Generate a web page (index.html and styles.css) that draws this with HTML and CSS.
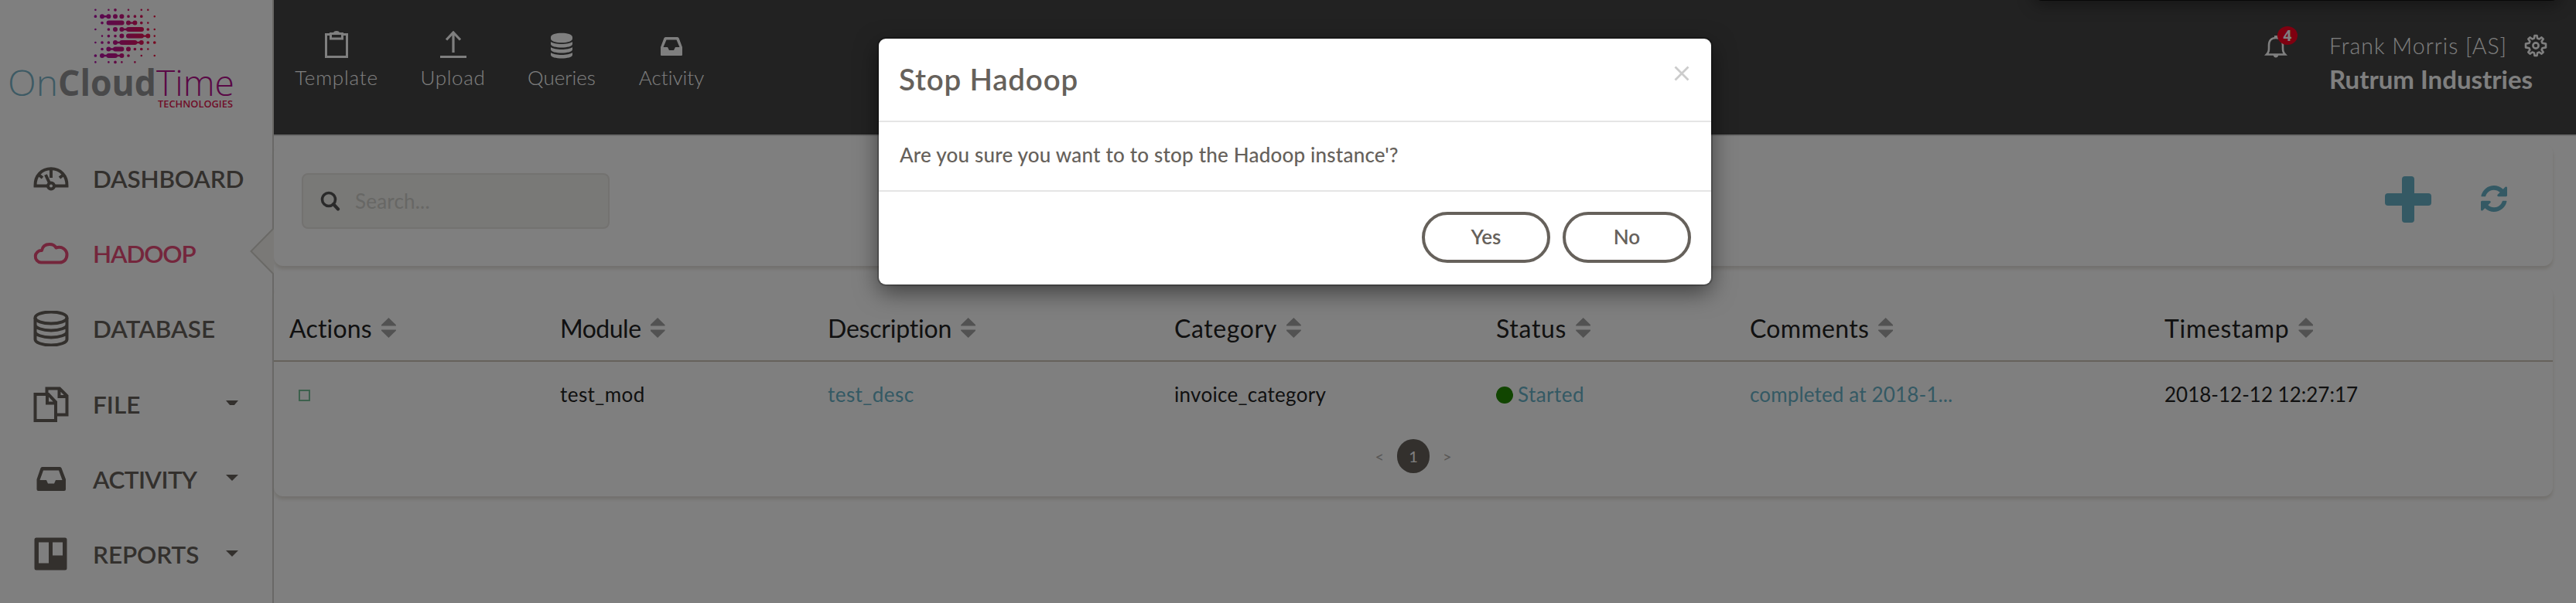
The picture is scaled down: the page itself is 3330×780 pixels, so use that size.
FILE: index.html
```html
<!DOCTYPE html>
<html lang="en">
<head>
<meta charset="utf-8">
<title>OnCloudTime - Hadoop</title>
<link rel="stylesheet" href="styles.css">
</head>
<body>
<div class="app">
  <aside class="sidebar">
    <svg class="logo" viewBox="0 0 352 170" width="352" height="170">
      <defs>
        <linearGradient id="dots" gradientUnits="userSpaceOnUse" x1="122" y1="0" x2="202" y2="0">
          <stop offset="0" stop-color="#b010a8"/><stop offset=".45" stop-color="#c81480"/><stop offset="1" stop-color="#f01440"/>
        </linearGradient>
      </defs>
      <g fill="none" stroke="url(#dots)" stroke-linecap="round">
        <path stroke-width="2.6" d="M123.4 12.8h.01M140.4 12.8h.01M166 12.8h.01M182.8 12.8h.01M191.3 12.8h.01M199.8 21.2h.01M191.3 29.6h.01M123.4 38h.01M199.8 38h.01M132 46.6h.01M199.8 46.6h.01M123.4 55h.01M191.3 63.5h.01M182.8 72h.01M199.8 72h.01M123.4 80.4h.01M140.4 80.4h.01M157.4 80.4h.01M174.4 80.4h.01"/>
        <path stroke-width="3.7" d="M149 12.8h.01M123.4 21.2h.01M166 21.2h.01M174.4 21.2h.01M182.8 21.2h.01M132 29.6h.01M182.8 29.6h.01M140.4 38h.01M191.3 38h.01M140.4 46.6h.01M149 46.6h.01M132 55h.01M140.4 55h.01M191.3 55h.01M199.8 55h.01M132 63.5h.01M174.4 63.5h.01M182.8 63.5h.01M123.4 72h.01M166 72h.01M149 80.4h.01"/>
        <path stroke-width="6" d="M132 21.2h.01M140.4 21.2h.01M149 21.2h.01M157.4 21.2h.01M140.6 29.6h17M166 29.6h.01M174.4 29.6h.01M149 38h.01M157.4 38h.01M166 38h17M157.4 46.6h.01M166 46.6h17M191.3 46.6h.01M149 55h.01M157.4 55h17M182.8 55h.01M140.4 63.5h.01M149 63.5h8.4M166 63.5h.01M132 72h.01M140.4 72h8.6M157.4 72h.01"/>
        <path stroke-width="2.4" d="M132 21.2h8.4v.01M166 29.6h8.4v.01M157.4 38h9v.01M182.8 46.6h8.5v.01M149 55h33v.01M140.4 63.5h9v.01M132 72h25v.01"/>
      </g>
      <g class="logo-name">
        <text class="logo-on" x="10" y="124.3" textLength="65" lengthAdjust="spacingAndGlyphs">On</text>
        <text class="logo-cloud" x="75" y="124.3" textLength="127" lengthAdjust="spacingAndGlyphs">Cloud</text>
        <text class="logo-time" x="202" y="124.3" textLength="101" lengthAdjust="spacingAndGlyphs">Time</text>
        <text class="logo-tech" x="204" y="138.8" textLength="97" lengthAdjust="spacingAndGlyphs">TECHNOLOGIES</text>
      </g>
    </svg>
    <nav class="menu">
      <a class="item"><svg class="ico" viewBox="0 0 46 46"><path d="M2.5 32.5C2 19 11 10.300 23 10.300S44 19 43.500 32.500Z" fill="none" stroke="currentColor" stroke-width="4"/><path d="M23 10v12M7 18l5 4M39 18l-5 4M16 18l7 15" fill="none" stroke="currentColor" stroke-width="4"/><circle cx="23" cy="32.500" r="4" fill="#fff" stroke="currentColor" stroke-width="4"/></svg><span class="t-dash">DASHBOARD</span></a>
      <a class="item active"><svg class="ico" viewBox="0 0 46 46"><path d="M10 34.500a7.500 7.500 0 0 1 1-15.500C12 13.500 16 11 21 11c4 0 7 1.500 8.500 4.500C37 13 43.500 18 43.500 24.500S39 34.500 34 34.500Z" fill="none" stroke="currentColor" stroke-width="4" stroke-linejoin="round"/></svg><span class="t-had">HADOOP</span></a>
      <a class="item"><svg class="ico" viewBox="0 0 46 46"><g fill="none" stroke="currentColor" stroke-width="4"><ellipse cx="23" cy="9" rx="20.500" ry="7.500"/><path d="M2.500 9v28c0 4 9 7.500 20.500 7.500S43.500 41 43.500 37V9M2.500 18c0 4 9 7.500 20.500 7.500S43.500 22 43.500 18M2.500 27c0 4 9 7.500 20.500 7.500S43.500 31 43.500 27"/></g></svg><span class="t-data">DATABASE</span></a>
      <a class="item"><svg class="ico" viewBox="0 0 46 46"><path d="M2.500 10h17l9.500 10v24H2.500ZM18 10v11.500h11M17.500 8V2.500H34L43.500 12v24.500H31M33.500 2.500V13h10" fill="none" stroke="currentColor" stroke-width="4"/></svg><span class="t-file">FILE</span><i class="caret clip"></i></a>
      <a class="item"><svg class="ico" viewBox="0 0 46 46"><path fill="currentColor" fill-rule="evenodd" d="M11.500 7h23q1.500 0 2 1.500L42 23v13q0 2-2 2H6.500q-2 0-2-2V23L9.500 8.500q.5-1.500 2-1.500ZM13 11.500 8.500 24H17l2 4.500h8L29 24h8.500L33 11.500Z"/></svg><span class="t-act">ACTIVITY</span><i class="caret"></i></a>
      <a class="item"><svg class="ico" viewBox="0 0 46 46"><path fill="currentColor" fill-rule="evenodd" d="M4 1.500h37q2.500 0 2.500 2.500v37q0 2.500-2.500 2.500H4q-2.500 0-2.500-2.500V4Q1.500 1.500 4 1.500ZM7 7.500v27h13v-27ZM25 7.500v17h13v-17Z"/></svg><span class="t-rep">REPORTS</span><i class="caret"></i></a>
    </nav>
    <svg class="notch" width="32" height="60" viewBox="0 0 32 60"><path d="M32 0 2.500 30 32 60" fill="#f4f3ef" stroke="#d4d2cc" stroke-width="2"/></svg>
  </aside>

  <div class="main">
    <header class="topbar">
      <nav class="tools">
        <a class="tool w1"><svg viewBox="0 0 36 36"><path d="M9 4.500H4.500v29h27v-29H27M10.500 3.500h15v6.500h-15Z" fill="none" stroke="currentColor" stroke-width="3"/><path d="M14 3q0-3 4-3t4 3z" fill="currentColor"/></svg><span>Template</span></a>
        <a class="tool w2"><svg viewBox="0 0 36 36"><path d="M18 28V3M9 11.500 18 2l9 9.500M1 33.500h34" fill="none" stroke="currentColor" stroke-width="3.200"/></svg><span>Upload</span></a>
        <a class="tool w3"><svg viewBox="0 0 36 36"><path fill="currentColor" d="M4 8c0-7 28-7 28 0v2c0 7-28 7-28 0ZM4 14c5 4 23 4 28 0v3c0 6-28 6-28 0ZM4 21c5 4 23 4 28 0v3c0 6-28 6-28 0ZM4 28c5 4 23 4 28 0v3c0 6-28 6-28 0Z"/></svg><span>Queries</span></a>
        <a class="tool w4"><svg viewBox="0 0 36 36"><path fill="currentColor" fill-rule="evenodd" d="M10 8h16l1.500 1L32 21v10q0 1-1 1H5q-1 0-1-1V21L8.500 9ZM11.500 11.500 7.500 21H13l2 4h6l2-4h5.500l-4-9.500Z"/></svg><span>Activity</span></a>
      </nav>
      <div class="account">
        <div class="bell">
          <svg width="30" height="30" viewBox="0 0 30 30"><path d="M3 25.500C6.500 22 6 19 6 13.500 6 7 9.500 4 15 4s9 3 9 9.500c0 5.500-.5 8.500 3 12Z" fill="none" stroke="currentColor" stroke-width="2.600"/><path d="M13 1h4v3h-4zM11.500 26h7q-1 3.500-3.500 3.500T11.500 26Z" fill="currentColor"/></svg>
          <b class="count">4</b>
        </div>
        <div class="who">
          <div class="user"><span>Frank Morris [AS]</span>
            <svg width="30" height="30" viewBox="0 0 30 30" fill="none" stroke="currentColor"><path stroke-width="2.600" stroke-linejoin="round" d="M13.500 2h3l.6 3.600 2.400.9 3-2.100 2.200 2.100-2.100 3.100.9 2.200 4.500.8v4.800l-4.500.8-.9 2.200 2.100 3.100-2.200 2.100-3-2.100-2.400.9-.6 3.600h-3l-.6-3.600-2.400-.9-3 2.100-2.200-2.100 2.100-3.100-.9-2.200-4.500-.8v-4.800l4.500-.8.9-2.200-2.100-3.100 2.200-2.100 3 2.100 2.400-.9Z"/><circle cx="15" cy="15" r="3.600" stroke-width="2.600"/></svg>
          </div>
          <div class="company">Rutrum Industries</div>
        </div>
      </div>
    </header>

    <section class="card toolbar">
      <div class="search">
        <svg width="26" height="26" viewBox="0 0 26 26" fill="none" stroke="currentColor"><circle cx="11" cy="11" r="8.500" stroke-width="3.600"/><path d="m17 17 6 6.500" stroke-width="4.200" stroke-linecap="round"/></svg>
        <span>Search...</span>
      </div>
      <div class="actions">
        <svg width="60" height="60" viewBox="0 0 60 60" fill="currentColor"><rect x="22" width="16" height="60" rx="4"/><rect y="22" width="60" height="16" rx="4"/></svg>
        <svg class="refresh" width="34" height="34" viewBox="0 0 1536 1536" fill="currentColor"><path d="M1511 928q0 5-1 7-64 268-268 434.500T764 1536q-146 0-282.500-55T238 1324l-129 129q-19 19-45 19t-45-19-19-45V960q0-26 19-45t45-19h448q26 0 45 19t19 45-19 45l-137 137q71 66 161 102t187 36q134 0 250-65t186-179q11-17 53-117 8-23 30-23h192q13 0 22.500 9.500t9.500 22.500zm25-800v448q0 26-19 45t-45 19h-448q-26 0-45-19t-19-45 19-45l138-138Q969 256 768 256q-134 0-250 65T332 500q-11 17-53 117-8 23-30 23H50q-13 0-22.500-9.500T18 608v-7q65-268 270-434.500T768 0q146 0 284 55.500T1297 212l130-129q19-19 45-19t45 19 19 45z"/></svg>
      </div>
    </section>

    <section class="card listing">
      <div class="row head">
        <div class="h1"><span>Actions</span><i class="sort"></i></div>
        <div class="h2"><span>Module</span><i class="sort"></i></div>
        <div class="h3"><span>Description</span><i class="sort"></i></div>
        <div class="h4"><span>Category</span><i class="sort"></i></div>
        <div class="h5"><span>Status</span><i class="sort"></i></div>
        <div class="h6"><span>Comments</span><i class="sort"></i></div>
        <div class="h7"><span>Timestamp</span><i class="sort"></i></div>
      </div>
      <div class="row body">
        <div><i class="stop"></i></div>
        <div class="c2">test_mod</div>
        <div class="c3 link">test_desc</div>
        <div class="c4">invoice_category</div>
        <div class="c5 link"><i class="dot"></i><span>Started</span></div>
        <div class="c6 link">completed at 2018-1...</div>
        <div class="c7">2018-12-12 12:27:17</div>
      </div>
      <div class="pager"><span>&lt;</span><b>1</b><span>&gt;</span></div>
    </section>
  </div>
</div>

<div class="flyout"></div>
<div class="backdrop"></div>
<div class="modal">
  <div class="modal-head"><h4>Stop Hadoop</h4><svg class="close" width="20" height="20" viewBox="0 0 20 20"><path d="m1.500 1.500 17 17m0-17-17 17" stroke="#ccc" stroke-width="2.800"/></svg></div>
  <div class="modal-body"><span>Are you sure you want to to stop the Hadoop instance'?</span></div>
  <div class="modal-foot"><button>Yes</button><button>No</button></div>
</div>
</body>
</html>
```

FILE: styles.css
```css
* { box-sizing: border-box; }
html, body { height: 100%; }
body { margin: 0; overflow: hidden; background: #fff; color: #222; font-family: Lato, "Open Sans", sans-serif; font-size: 26px; font-variant-ligatures: none; }
svg { display: block; flex: none; }

.app { display: flex; height: 780px; }
.sidebar { position: relative; width: 354px; flex: none; border-right: 2px solid #d2d0cc; color: #66615b; }
.logo { height: 170px; }
.logo-name { font-family: "Open Sans", sans-serif; font-size: 46px; }
.logo-on { font-weight: 300; fill: #7ab4c8; }
.logo-cloud { font-weight: 700; fill: #929395; }
.logo-time { font-weight: 300; fill: #b4108c; }
.logo-tech { font-size: 12.600px; font-weight: 600; fill: #e01850; }

.menu { display: flex; flex-direction: column; padding-top: 12px; }
.item { display: flex; align-items: center; height: 97.300px; padding-left: 43px; font-size: 31.500px; font-weight: 600; }
.item span { margin-left: 31px; }
.t-dash { letter-spacing: -.2px; }
.t-had { letter-spacing: -1.2px; }
.t-act { letter-spacing: -.6px; }
.t-rep { letter-spacing: -.1px; }
.item.active { color: #e84c78; }
.ico { width: 46px; height: 46px; }
.caret { margin: -3px 44px 0 auto; border: 8px solid transparent; border-top-color: currentColor; border-bottom: 0; }
.clip { height: 6px; overflow: hidden; border: 0; width: 16px; background: currentColor; clip-path: polygon(0 0, 100% 0, 68% 100%, 32% 100%); }
.notch { position: absolute; right: -2px; top: 295px; }

.main { flex: 1; min-width: 0; display: flex; flex-direction: column; }
.topbar { display: flex; justify-content: space-between; height: 176px; background: #444; border-bottom: 2px solid #d8d8d8; color: #fff; }
.tools { display: flex; gap: 56px; padding: 40px 0 0 27px; }
.tool { display: flex; flex-direction: column; align-items: center; gap: 8px; font-weight: 300; line-height: 32px; }
.tool svg { width: 36px; height: 36px; }
.tool span { white-space: nowrap; }
.w1 { width: 108px; letter-spacing: .8px; }
.w2 { width: 81px; letter-spacing: .7px; }
.w3 { width: 88px; }
.w4 { width: 84px; }
.account { display: flex; padding: 34px 37px 0 0; }
.bell { position: relative; width: 84px; padding-top: 11px; }
.count { position: absolute; left: 17px; top: 0; width: 26px; height: 24px; border-radius: 50%; background: #ff0020; font: 700 19px/25px "Open Sans", sans-serif; text-align: center; }
.who { width: 282px; white-space: nowrap; }
.user { display: flex; justify-content: space-between; align-items: center; height: 50px; font-size: 28.500px; font-weight: 300; letter-spacing: 1px; }
.company { font-size: 33px; line-height: 36px; font-weight: 700; }

.card { width: 2946px; background: #fff; border-radius: 12px; box-shadow: 0 4px 4px rgba(204, 197, 185, .5); }
.toolbar { display: flex; justify-content: space-between; height: 158px; margin-top: 10px; padding: 38px 59px 0 36px; }
.search { display: flex; align-items: center; gap: 19px; width: 398px; height: 72px; padding-left: 22px; background: #f3f2ee; border: 2px solid #e6e4e0; border-radius: 8px; color: #555; }
.search span { color: #cfcfca; letter-spacing: .2px; }
.actions { display: flex; gap: 64px; padding-top: 4px; color: #68b3c8; }
.refresh { margin-top: 12px; }

.listing { height: 272px; margin-top: 26px; }
.row { display: grid; grid-template-columns: 350px 346px 448px 416px 328px 536px 1fr; align-items: center; padding-left: 20px; white-space: nowrap; }
.row > div { display: flex; align-items: center; }
.head { height: 98px; padding-top: 12px; border-bottom: 2px solid #ccc5b9; font-size: 32px; }
.h1 { letter-spacing: .2px; }
.h2 { letter-spacing: -.5px; }
.h3 { letter-spacing: -.2px; }
.h4 { letter-spacing: .6px; }
.h5 { letter-spacing: .7px; }
.h6 { letter-spacing: .3px; }
.h7 { letter-spacing: .7px; }
.body { height: 86px; padding-bottom: 2px; }
.c2, .c3, .c5 { letter-spacing: .45px; }
.c4 { letter-spacing: .3px; }
.c6 { letter-spacing: .15px; }
.sort { width: 19px; height: 26px; margin-left: 12px; background: #a4a4a4; clip-path: polygon(50% 0, 100% 36%, 100% 40%, 0 40%, 0 36%, 50% 0, 50% 100%, 0 64%, 0 60%, 100% 60%, 100% 64%, 50% 100%); }
.link { color: #68b3c8; }
.stop { width: 15px; height: 15px; margin: 3px 0 0 12px; border: 2px solid #7ac29a; }
.dot { width: 22px; height: 22px; margin: 1px 6px 0 0; border-radius: 50%; background: #228a00; }
.pager { display: flex; justify-content: center; align-items: center; gap: 17px; height: 44px; margin-top: 14px; font-size: 20px; color: #b0aeaa; }
.pager b { width: 42px; height: 44px; border-radius: 21px; background: #66615b; color: #fff; font-weight: 400; line-height: 44px; text-align: center; }

.flyout { position: absolute; left: 2628px; top: -40px; width: 682px; height: 41px; border-radius: 12px; background: #111; box-shadow: 0 6px 20px rgba(0, 0, 0, .35); }
.backdrop { position: absolute; inset: 0; background: rgba(0, 0, 0, .5); }
.modal { position: absolute; left: 1136px; top: 50px; width: 1076px; height: 318px; background: #fff; border-radius: 9px; color: #66615b; box-shadow: 0 0 0 2px rgba(0, 0, 0, .2), 0 10px 30px rgba(0, 0, 0, .5); font-weight: 500; }
.modal-head { display: flex; justify-content: space-between; height: 108px; padding: 28px 28px 0 26px; border-bottom: 2px solid #e5e5e5; }
.modal h4 { margin: 0; font-size: 38.500px; font-weight: 600; line-height: 48px; letter-spacing: .8px; }
.close { margin-top: 7px; }
.modal-body { height: 90px; padding: 25px 27px 0; border-bottom: 2px solid #e5e5e5; line-height: 34px; letter-spacing: .2px; }
.modal-foot { display: flex; justify-content: flex-end; gap: 16px; padding: 26px 26px 0; }
.modal button { width: 166px; height: 66px; padding: 0 0 2px; border: 4px solid #66615b; border-radius: 33px; background: transparent; color: #66615b; font: 600 26px Lato, sans-serif; }
```
